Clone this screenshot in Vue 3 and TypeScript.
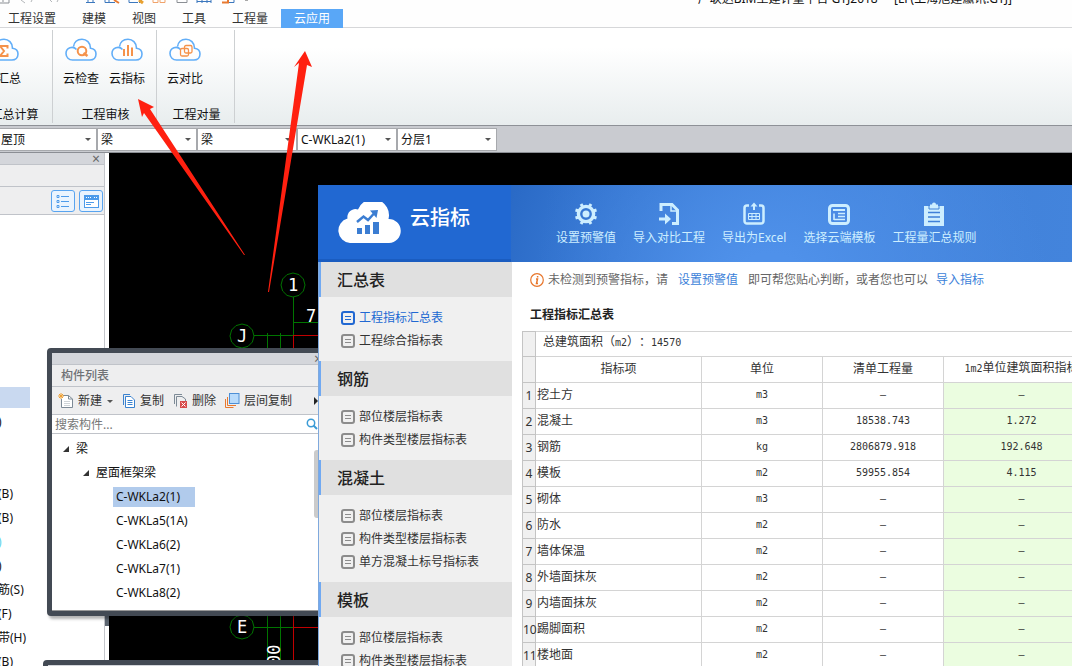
<script setup lang="ts">
import { ref } from 'vue'

interface SheetRow { name: string; unit: string; total: string; per: string }
interface NavSection { title: string; items: string[] }
interface RibbonGroup { label: string; actions: { label: string; icon: string }[] }

const tabs = ['工程设置', '建模', '视图', '工具', '工程量', '云应用']
const activeTab = ref('云应用')

const groups: RibbonGroup[] = [
  { label: '汇总计算', actions: [{ label: '云汇总', icon: 'sum' }] },
  { label: '工程审核', actions: [{ label: '云检查', icon: 'check' }, { label: '云指标', icon: 'bars' }] },
  { label: '工程对量', actions: [{ label: '云对比', icon: 'compare' }] },
]

const selectors = [
  { id: 'floor', label: '楼层', value: '屋顶' },
  { id: 'category', label: '构件类别', value: '梁' },
  { id: 'type', label: '构件类型', value: '梁' },
  { id: 'member', label: '构件', value: 'C-WKLa2(1)' },
  { id: 'layer', label: '分层', value: '分层1' },
]

const moduleRows = ['', ')', '', '', '(B)', '(B)', ')', ')', '筋(S)', '(F)', '带(H)', '(B)']

const members = ['C-WKLa2(1)', 'C-WKLa5(1A)', 'C-WKLa6(2)', 'C-WKLa7(1)', 'C-WKLa8(2)']
const activeMember = ref('C-WKLa2(1)')
const query = ref('')

const sections: NavSection[] = [
  { title: '汇总表', items: ['工程指标汇总表', '工程综合指标表'] },
  { title: '钢筋', items: ['部位楼层指标表', '构件类型楼层指标表'] },
  { title: '混凝土', items: ['部位楼层指标表', '构件类型楼层指标表', '单方混凝土标号指标表'] },
  { title: '模板', items: ['部位楼层指标表', '构件类型楼层指标表'] },
]
const activeSheet = ref('工程指标汇总表')

const tools = [
  { label: '设置预警值', icon: 'gear' },
  { label: '导入对比工程', icon: 'import' },
  { label: '导出为Excel', icon: 'export' },
  { label: '选择云端模板', icon: 'template' },
  { label: '工程量汇总规则', icon: 'rules' },
]

const rows: SheetRow[] = [
  { name: '挖土方', unit: 'm3', total: '–', per: '–' },
  { name: '混凝土', unit: 'm3', total: '18538.743', per: '1.272' },
  { name: '钢筋', unit: 'kg', total: '2806879.918', per: '192.648' },
  { name: '模板', unit: 'm2', total: '59955.854', per: '4.115' },
  { name: '砌体', unit: 'm3', total: '–', per: '–' },
  { name: '防水', unit: 'm2', total: '–', per: '–' },
  { name: '墙体保温', unit: 'm2', total: '–', per: '–' },
  { name: '外墙面抹灰', unit: 'm2', total: '–', per: '–' },
  { name: '内墙面抹灰', unit: 'm2', total: '–', per: '–' },
  { name: '踢脚面积', unit: 'm2', total: '–', per: '–' },
  { name: '楼地面', unit: 'm2', total: '–', per: '–' },
]

const axes = [
  { name: '1', x: 184, y: 132 },
  { name: 'J', x: 133, y: 183 },
  { name: 'E', x: 133, y: 474 },
]

function ring(x: number, y: number): string {
  return Array.from({ length: 12 }, (_, i) => {
    const a = (i * Math.PI) / 6
    return `${(x + 12 * Math.cos(a)).toFixed(1)},${(y + 12 * Math.sin(a)).toFixed(1)}`
  }).join(' ')
}
</script>

<template>
  <div class="app">
    <header class="titlebar">
      <svg class="quick" width="260" height="5" viewBox="0 0 260 5" fill="none" aria-hidden="true">
        <path d="M0 3h9V0M3 0v2" stroke="#8b8f94" />
        <path d="M21 0l4 3M32 0l-1 2M50 0l2 2M58 0l-1 2" stroke="#b3b6b9" />
        <path d="M86 2.500h9M88 0v2M93 0v2" stroke="#3b77bd" />
        <path d="M105 0v2.500h10M109 0v2" stroke="#3b77bd" />
        <path d="M114 0l5 3" stroke="#e8792f" stroke-width="2" />
        <path d="M129 0v2.500h9M139 3l3-3" stroke="#3b77bd" />
        <path d="M139 0l4 3" stroke="#e9a12f" stroke-width="3" />
        <path d="M153 0v2.500h5V0M160 0v2.500h5V0" stroke="#f0a36b" />
        <path d="M177 0v2.500h10V0" stroke="#8b8f94" />
        <path d="M197 0v3M202 0v3M207 0v3M211 0v3M197 1.500h14" stroke="#3b77bd" />
        <path d="M222 2.500h6V0" stroke="#e8792f" stroke-width="2" />
        <path d="M229 2.500h5V0" stroke="#3b77bd" />
        <path d="M245 0h3" stroke="#555" />
      </svg>
      <h1 class="caption">广联达BIM土建计量平台 GTJ2018&nbsp; - &nbsp;[LF(上海旭建瀛讯.GTJ]</h1>
    </header>

    <nav class="tabs">
      <button v-for="t in tabs" :key="t" type="button" class="tab" :class="{ on: t === activeTab }" @click="activeTab = t">{{ t }}</button>
    </nav>

    <section class="ribbon">
      <div v-for="g in groups" :key="g.label" class="group">
        <div class="actions">
          <button v-for="a in g.actions" :key="a.label" type="button" class="action">
            <svg width="32" height="24" viewBox="0 0 32 24" fill="none" aria-hidden="true">
              <path d="M11.500 11.500C8 7.500 1 9.500 1 15.500C1 19.500 4 22 7.500 22H25C28.500 22 31 19.500 31 16C31 12.500 28.500 10.500 25.500 10.200C25.500 4.500 21.500 1.200 17 1.200C12 1.200 9 4.500 8.600 8.500" stroke="#62aef8" stroke-width="1.600" />
              <path v-if="a.icon === 'sum'" d="M20.500 10.500V8H13L17 13L13 18H20.500V15.500" stroke="#f5924a" stroke-width="2" />
              <template v-else-if="a.icon === 'check'">
                <circle cx="17" cy="13" r="4.300" stroke="#f5924a" stroke-width="2" />
                <path d="M18.500 15L22.500 18" stroke="#f5924a" stroke-width="2.400" />
              </template>
              <path v-else-if="a.icon === 'bars'" d="M13 11V18M17 7V18M21 9.500V18" stroke="#f5924a" stroke-width="2" />
              <g v-else stroke="#f5924a" stroke-width="1.300">
                <rect x="11.500" y="10.500" width="8" height="7.500" rx="1.500" />
                <rect x="15.500" y="7.500" width="7.500" height="7.500" rx="1.500" />
              </g>
            </svg>
            <span>{{ a.label }}</span>
          </button>
        </div>
        <div class="group-label">{{ g.label }}</div>
      </div>
    </section>

    <section class="selectors">
      <div v-for="s in selectors" :key="s.id" class="picker">
        <select :id="s.id" :aria-label="s.label"><option>{{ s.value }}</option></select>
      </div>
    </section>

    <div class="workspace">
      <aside class="modules">
        <div class="strip"><button type="button" class="close" aria-label="关闭">×</button></div>
        <div class="modules-title"></div>
        <div class="modules-tools">
          <button type="button" class="view" aria-label="列表视图">
            <svg width="22" height="20" viewBox="0 0 22 20" fill="none" stroke="#4d9bea" aria-hidden="true">
              <path d="M9 5.500h8M9 10.500h8M9 15.500h8" />
              <path d="M5 4.500h2v2h-2zM5 9.500h2v2h-2zM5 14.500h2v2h-2z" />
            </svg>
          </button>
          <button type="button" class="view" aria-label="面板视图">
            <svg width="22" height="20" viewBox="0 0 22 20" fill="none" aria-hidden="true">
              <rect x="4.500" y="4.500" width="14" height="12" fill="#fff" stroke="#4d9bea" />
              <path d="M4 7h15" stroke="#4d9bea" stroke-width="4" />
              <path d="M6 6.500h6M14 6.500h3" stroke="#fff" stroke-dasharray="1 1" />
              <path d="M6 11.500h8M6 13.500h5" stroke="#4d9bea" />
            </svg>
          </button>
        </div>
        <ul class="module-list">
          <li v-for="(m, i) in moduleRows" :key="i" :class="{ on: i === 0, cyan: i === 6 }">{{ m }}</li>
        </ul>
      </aside>
      <div class="splitter"><span class="grip"></span></div>
      <div class="drawing">
        <svg width="209" height="513" viewBox="0 0 209 513" fill="none" aria-hidden="true">
          <g stroke="#007400" stroke-width="1">
            <path d="M184.500 144V182M184 169.500H209M145 182.500H184M158.500 180V513M171.500 180V513M145 474.500H184" />
            <polygon v-for="a in axes" :key="a.name" :points="ring(a.x, a.y)" />
          </g>
          <path d="M184.500 182V513M184 182.500H209M184 474.500H209" stroke="#c00000" />
          <g fill="#fff" font-family="'DejaVu Sans Mono', monospace" font-size="17">
            <text v-for="a in axes" :key="a.name" :x="a.x" :y="a.y + 6" text-anchor="middle">{{ a.name }}</text>
            <text x="197" y="169">7</text>
            <text transform="translate(171 512) rotate(-90)">00</text>
          </g>
        </svg>
      </div>
    </div>

    <section class="members">
      <div class="strip"><button type="button" class="close" aria-label="关闭构件列表">×</button></div>
      <h2 class="members-title">构件列表</h2>
      <div class="members-tools">
        <button type="button" class="new">
          <svg width="16" height="16" viewBox="0 0 16 16" fill="none" aria-hidden="true">
            <path d="M5 2.500H10.500L14.500 6V14.500H3.500V6" fill="#fff" stroke="#7d8a96" />
            <path d="M10.500 2.500V6H14.500" stroke="#7d8a96" />
            <path d="M6 8.500h6M6 10.500h6M6 12.500h6" stroke="#cfd4d8" />
            <path d="M3 0v6M0 3h6M1 1l4 4M5 1L1 5" stroke="#f0a030" />
          </svg>新建<i class="caret"></i>
        </button>
        <button type="button" class="copy">
          <svg width="14" height="16" viewBox="0 0 14 16" fill="none" stroke="#3a82cf" aria-hidden="true">
            <path d="M1.500 12V1.500H8" />
            <path d="M3.500 3.500H9L12.500 7V14.500H3.500Z" fill="#fff" />
            <path d="M5.500 7.500h5M5.500 9.500h5M5.500 11.500h5" />
          </svg>复制
        </button>
        <button type="button" class="remove">
          <svg width="15" height="16" viewBox="0 0 15 16" fill="none" aria-hidden="true">
            <path d="M1.500 11V1.500H9M3.500 13.500V3.500H9L12.500 6V8" stroke="#7d8a96" />
            <rect x="7" y="8" width="7" height="7" fill="#d84b4b" />
            <path d="M8.500 9.500l4 4M12.500 9.500l-4 4" stroke="#fff" />
          </svg>删除
        </button>
        <button type="button">
          <svg width="15" height="16" viewBox="0 0 15 16" fill="none" aria-hidden="true">
            <path d="M.5 6V14.500H8.500" stroke="#e8792f" />
            <path d="M2.500 4V12.500H11" stroke="#e8792f" />
            <rect x="4.500" y=".5" width="9.500" height="10" fill="#b9dbfb" stroke="#4d8fd6" />
          </svg>层间复制
        </button>
        <i class="more"></i>
      </div>
      <div class="search">
        <input v-model="query" type="text" aria-label="搜索构件" placeholder="搜索构件..." />
        <svg width="12" height="12" viewBox="0 0 12 12" fill="none" stroke="#3b9bd6" aria-hidden="true">
          <circle cx="5" cy="5" r="3.700" stroke-width="1.500" /><path d="M7.500 7.500L11 11" stroke-width="2" />
        </svg>
      </div>
      <div class="tree">
        <div class="tree-rows">
          <div class="node"><i class="open"></i>梁</div>
          <div class="node sub"><i class="open"></i>屋面框架梁</div>
          <button v-for="m in members" :key="m" type="button" class="leaf" :class="{ on: m === activeMember }" @click="activeMember = m">{{ m }}</button>
        </div>
        <span class="thumb"></span>
      </div>
    </section>
    <div class="next-panel"></div>

    <section class="cloud">
      <header class="cloud-head">
        <div class="brand">
          <svg width="64" height="42" viewBox="0 0 64 42" aria-hidden="true">
            <path d="M13 41A12.500 12.500 0 0 1 10.500 16.500A8 8 0 0 1 21 7.500A16 16 0 0 1 51.500 17A12 12 0 0 1 52 41Z" fill="#fff" />
            <path d="M20 26h5v6h-5zM28 23h5v9h-5zM36 20h6v12h-6z" fill="#3b7dd2" />
            <path d="M20 20L26.500 14.500L31 18L37 11.500" fill="none" stroke="#3b7dd2" stroke-width="2.500" />
            <path d="M33 8.500L41 8L39.500 16Z" fill="#3b7dd2" />
          </svg>
          <h2>云指标</h2>
        </div>
        <nav class="tools">
          <button v-for="t in tools" :key="t.label" type="button" class="tool">
            <svg width="24" height="24" viewBox="0 0 24 24" fill="none" stroke="#cdeeff" aria-hidden="true">
              <template v-if="t.icon === 'gear'">
                <circle cx="12" cy="12" r="7.600" stroke-width="3.400" />
                <circle cx="12" cy="12" r="3.500" fill="#cdeeff" stroke="none" />
                <path d="M15.500 4.500L17 2M8.500 4.500L7 2M15.500 19.500L17 22M8.500 19.500L7 22M19 9L22.500 8M19 15L22.500 16M5 9L1.500 8M5 15L1.500 16" stroke-width="3" />
              </template>
              <template v-else-if="t.icon === 'import'">
                <path d="M4 9V2.500H15L20.500 8V21.500H15" stroke-width="3" />
                <path d="M14 2V9H21" stroke-width="1.500" />
                <path d="M2 17H9" stroke-width="3" />
                <path d="M8 11.500L14 17L8 22.500Z" fill="#cdeeff" stroke="none" />
              </template>
              <template v-else-if="t.icon === 'export'">
                <path d="M7 3.500H5A2.500 2.500 0 0 0 2.500 6V19A2.500 2.500 0 0 0 5 21.500H19A2.500 2.500 0 0 0 21.500 19V6A2.500 2.500 0 0 0 19 3.500H17" stroke-width="2.500" />
                <path d="M12 8V2" stroke-width="2" />
                <path d="M8.500 4.500L12 .500L15.500 4.500Z" fill="#cdeeff" stroke="none" />
                <path d="M6.500 11.500h11v6h-11zM6.500 14.500h11M10 11.500v6M14 11.500v6" />
              </template>
              <template v-else-if="t.icon === 'template'">
                <rect x="2.500" y="3.500" width="19" height="18" rx="3" stroke-width="3" />
                <path d="M6 8H18" stroke-width="2" />
                <path d="M7 11.500V18M11 11.500H18M11 14.500H18M7 17.500H18" stroke-width="1.600" />
              </template>
              <template v-else>
                <path d="M2 4H8V2.500H10A2 2 0 0 1 14 2.500H16V4H22V24H2Z" fill="#cdeeff" stroke="none" />
                <path d="M7 3V7H17V3" stroke="#4283d8" />
                <path d="M6 10.500H18M6 15H18M6 19.500H18" stroke="#3f80d8" stroke-width="1.600" />
              </template>
            </svg>
            <span>{{ t.label }}</span>
          </button>
        </nav>
      </header>

      <div class="cloud-body">
        <aside class="side">
          <section v-for="s in sections" :key="s.title">
            <h3>{{ s.title }}</h3>
            <ul>
              <li v-for="item in s.items" :key="item">
                <a href="#" :class="{ on: item === activeSheet }" @click.prevent="activeSheet = item">
                  <svg width="14" height="14" viewBox="0 0 14 14" fill="none" stroke="currentColor" aria-hidden="true">
                    <rect x="1" y="1" width="12" height="12" rx="2" stroke-width="2" />
                    <path d="M4 5.500h6M4 8.500h6" />
                  </svg><span>{{ item }}</span>
                </a>
              </li>
            </ul>
          </section>
        </aside>

        <main class="sheet">
          <p class="notice">
            <svg width="14" height="14" viewBox="0 0 14 14" fill="none" aria-hidden="true">
              <circle cx="7" cy="7" r="6.300" stroke="#e8762c" stroke-width="1.200" />
              <path d="M6 6H7.500L6.500 10.500H8M7.600 3V4.500" stroke="#e8762c" stroke-width="1.500" />
            </svg>
            <span>未检测到预警指标，请</span><a href="#">设置预警值</a><span>即可帮您贴心判断，或者您也可以</span><a href="#" class="last">导入指标</a>
          </p>
          <h3 class="sheet-title">工程指标汇总表</h3>
          <table>
            <colgroup><col class="c-no" /><col class="c-name" /><col class="c-unit" /><col class="c-total" /><col class="c-per" /></colgroup>
            <thead>
              <tr class="area"><th class="no"></th><td colspan="4">总建筑面积（<b>m2</b>）：<b>14570</b></td></tr>
              <tr><th class="no"></th><th>指标项</th><th>单位</th><th>清单工程量</th><th><b>1m2</b>单位建筑面积指标</th></tr>
            </thead>
            <tbody>
              <tr v-for="(r, i) in rows" :key="r.name">
                <th class="no">{{ i + 1 }}</th>
                <td class="name">{{ r.name }}</td>
                <td><b>{{ r.unit }}</b></td>
                <td><b>{{ r.total }}</b></td>
                <td class="per"><b>{{ r.per }}</b></td>
              </tr>
            </tbody>
          </table>
        </main>
      </div>
    </section>

    <svg class="arrows" aria-hidden="true">
      <polygon points="138,99 154,107 150,109 245,255 244,255 144,113 142,117" fill="#ff2010" />
      <polygon points="305,51 312,67 307,65 269,292 268,292 299,63 294,67" fill="#ff2010" />
    </svg>
  </div>
</template>

<style>
body { margin: 0; overflow: hidden; }
</style>

<style scoped>
.app { position: relative; display: flex; flex-direction: column; height: 100vh; overflow: hidden; background: #fff; color: #222; font: 12px/16px "Noto Sans", "Noto Sans CJK SC", sans-serif; text-spacing-trim: space-all; }
.app * { box-sizing: border-box; }
button, select, input { font: inherit; color: inherit; border: 0; padding: 0; margin: 0; background: none; border-radius: 0; }
h1, h2, h3, p, ul { margin: 0; padding: 0; font-size: inherit; font-weight: normal; }
ul { list-style: none; }
a { text-decoration: none; color: #3b7fd9; }
svg { display: block; flex: none; }

.titlebar { display: flex; justify-content: space-between; align-items: flex-end; height: 9px; padding-right: 60px; overflow: hidden; background: #fefefe; }
.quick { align-self: flex-start; }
.caption { white-space: nowrap; line-height: 16px; padding-bottom: 2px; color: #111; }

.tabs { display: flex; height: 19px; padding-right: 8px; margin-left: -5px; border-bottom: 1px solid #d6d7d9; background: #fefefe; }
.tab { height: 19px; padding: 0 13px; white-space: nowrap; line-height: 20px; color: #333; }
.tab.on { background: #59a7f7; color: #fff; }

.ribbon { display: flex; height: 97px; padding: 2px 0; margin-left: -25px; background: linear-gradient(#fff 20%, #e8edee); }
.group { display: flex; flex-direction: column; justify-content: space-between; width: 78px; border-right: 1px solid #cdd0d2; }
.group:nth-child(2) { width: 104px; }
.actions { display: flex; padding: 8px 0 0 5px; }
.action { display: flex; flex-direction: column; align-items: center; width: 46px; gap: 9px; color: #111; white-space: nowrap; }
.group-label { padding-left: 2px; text-align: center; color: #111; }

.selectors { display: flex; height: 28px; margin-left: -3px; padding-top: 1px; align-items: center; background: #c9cbd0; border-top: 1px solid #8e9197; border-bottom: 1px solid #8b8e94; }
.picker { position: relative; width: 100px; height: 23px; background: #fff; border: 1px solid #a7a9ad; }
.picker::after { content: ""; position: absolute; right: 5px; top: 9px; border: 3px solid transparent; border-top-color: #555; pointer-events: none; }
.picker select { width: 100%; height: 21px; padding-left: 3px; appearance: none; color: #111; outline: none; }

.workspace { display: flex; flex: 1; min-height: 0; }
.modules { width: 105px; border-right: 1px solid #c4c6cb; background: #fff; overflow: hidden; }
.strip { display: flex; justify-content: flex-end; height: 12px; background: #d4d6db; border-bottom: 1px solid #c0c3c9; }
.close { width: 16px; height: 12px; font-size: 14px; line-height: 12px; color: #666; }
.modules-title { height: 22px; background: #eeeeef; border-bottom: 1px solid #c0c3c9; }
.modules-tools { display: flex; justify-content: flex-end; align-items: center; gap: 4px; height: 28px; padding-right: 1px; background: #eeeeef; border-bottom: 1px solid #c0c3c9; }
.view { padding: 0; border: 1px solid #58a4f0; border-radius: 3px; background: #eaf4fe; }
.module-list { padding-top: 171px; }
.module-list li { height: 24px; padding: 4px 0; margin-left: -2px; white-space: nowrap; color: #111; }
.module-list li.on { width: 32px; height: 21px; margin-top: 1px; margin-bottom: 2px; background: #c9d9f0; }
.module-list li.cyan { color: #5fd3ea; }
.splitter { width: 4px; background: #fff; }
.grip { display: block; height: 46px; margin-top: 427px; background: #5c6570; }
.drawing { flex: 1; min-width: 0; background: #000; overflow: hidden; }

.members { position: absolute; left: 47px; top: 348px; width: 284px; border: 5px solid #434a54; border-radius: 4px; background: #fff; box-shadow: 2px 3px 3px rgba(0, 0, 0, .3); }
.members-title { height: 22px; padding: 3px 9px; background: #eeeeef; border-bottom: 1px solid #c0c3c9; color: #707276; font-weight: 500; }
.members-tools { display: flex; align-items: center; height: 28px; padding: 1px 0 0 6px; background: #eeeeef; border-bottom: 1px solid #c0c3c9; color: #333; }
.members-tools button { display: flex; align-items: center; gap: 4px; white-space: nowrap; }
.members-tools .new { margin-right: 9px; }
.members-tools .copy, .members-tools .remove { margin-right: 9px; }
.caret { border: 3px solid transparent; border-top-color: #555; margin: 3px 0 0 1px; }
.more { margin-left: 22px; border: 4px solid transparent; border-left-color: #222; }
.search { display: flex; align-items: center; height: 19px; padding-right: 8px; border-bottom: 1px solid #c0c3c9; }
.search input { flex: 1; min-width: 0; height: 18px; padding-left: 3px; outline: none; }
.search input::placeholder { color: #777; opacity: 1; }
.tree { display: flex; height: 177px; padding-top: 3px; border-bottom: 1px solid #999; color: #111; }
.tree-rows { flex: 1; }
.node { display: flex; align-items: center; height: 24px; padding-left: 11px; gap: 7px; }
.node.sub { padding-left: 31px; }
.open { border-style: solid; border-width: 0 0 6px 6px; border-color: transparent transparent #333; }
.leaf { display: block; height: 20px; padding: 0 15px 0 3px; margin: 2px 0 4px 61px; line-height: 20px; text-align: left; }
.leaf.on { background: #b1cbec; }
.thumb { width: 12px; height: 68px; margin: 13px 0 0; background: #cbcbcb; border-radius: 3px; }
.next-panel { position: absolute; left: 43px; top: 660px; width: 288px; height: 40px; border: 5px solid #434a54; border-radius: 4px; background: #d4d6db; }

.cloud { position: absolute; left: 318px; right: 0; top: 185px; bottom: 0; display: flex; flex-direction: column; background: #fff; overflow: hidden; }
.cloud-head { display: flex; height: 77px; flex: none; background: radial-gradient(circle at 60% 150%, #4f91ea 10%, transparent 60%), linear-gradient(100deg, #2a6ac6 30%, #4080d8 75%, #4384dc); }
.brand { display: flex; width: 193px; padding: 17px 0 0 19px; gap: 9px; background: #2168d2; border-bottom: 3px solid #1a5cc0; }
.brand h2 { color: #fff; font-size: 20px; line-height: 32px; font-weight: 500; }
.tools { display: flex; gap: 17px; padding: 17px 0 0 45px; }
.tool { display: flex; flex-direction: column; align-items: center; gap: 4px; height: 45px; color: #cdeeff; white-space: nowrap; }
.cloud-body { display: flex; flex: 1; min-height: 0; }
.side { width: 194px; flex: none; background: #f0f0f0; border-left: 1px solid #7fa9dd; overflow: hidden; }
.side h3 { height: 35px; padding-left: 16px; border-left: 2px solid #70a9f2; background: #e0e0e0; color: #222; font-size: 16px; line-height: 37px; font-weight: 500; }
.side ul { padding: 9px 0; }
.side li a { display: flex; align-items: center; height: 23px; padding-left: 22px; gap: 4px; color: #8c8c8c; }
.side li a span { color: #333; }
.side li a.on, .side li a.on span { color: #2168d2; }
.sheet { flex: 1; min-width: 0; padding-left: 10px; overflow: hidden; }
.notice { display: flex; align-items: center; height: 36px; padding-left: 8px; white-space: nowrap; color: #666; }
.notice span { margin-left: 4px; }
.notice a { margin: 0 6px 0 10px; }
.notice a.last { margin-left: 8px; }
.sheet-title { height: 33px; padding-left: 8px; line-height: 34px; color: #222; font-weight: 600; }

table { width: 577px; table-layout: fixed; border-collapse: collapse; font-family: "Noto Sans CJK SC", sans-serif; color: #333; }
.c-no { width: 13px; }
.c-name { width: 166px; }
.c-unit, .c-total { width: 121px; }
.c-per { width: 156px; }
th, td { height: 26px; padding: 0 0 4px; border: 1px solid #d4d4d4; font-weight: normal; text-align: center; line-height: 16px; white-space: nowrap; }
b { font: 10px/16px "DejaVu Sans Mono", monospace; }
.area th, .area td { height: 25px; }
.area td { padding-left: 7px; text-align: left; }
td.name { padding-left: 1px; text-align: left; }
th.no { padding: 0; background: #f0f0f0; border-color: #c4c4c4; font-family: "Noto Sans", sans-serif; }
.per { background: #ebfde0; }
.arrows { position: absolute; inset: 0; width: 100%; height: 100%; pointer-events: none; }
</style>
